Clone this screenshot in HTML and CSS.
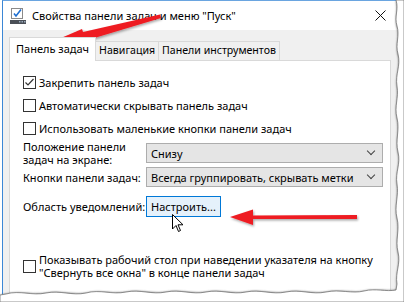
FILE: index.html
```html
<!DOCTYPE html>
<html lang="ru">
<head>
    <meta charset="UTF-8">
    <title>Свойства панели задач и меню "Пуск"</title>
    <link rel="stylesheet" href="styles.css">
</head>
<body>

<div class="window">
    <div class="titlebar">
        <svg class="app-icon" width="16" height="16" viewBox="0 0 16 16">
            <rect x="1.5" y="0.5" width="11" height="10" fill="#fff" stroke="#8a8a8a"/>
            <path d="M4 5.5 L6 8 L11 1.5" fill="none" stroke="#1f6fd1" stroke-width="1.6"/>
            <rect x="0" y="12" width="16" height="4" fill="#4a4f57"/>
            <rect x="9" y="13" width="1.5" height="1.5" fill="#9ab"/>
            <rect x="11.5" y="13" width="1.5" height="1.5" fill="#9ab"/>
            <rect x="14" y="13" width="1.5" height="1.5" fill="#9ab"/>
        </svg>
        <span class="title">Свойства панели задач и меню "Пуск"</span>
        <svg class="close" width="11" height="11" viewBox="0 0 11 11">
            <path d="M0.5 0.5 L10.5 10.5 M10.5 0.5 L0.5 10.5" stroke="#111" stroke-width="1"/>
        </svg>
    </div>

    <div class="client">
        <div class="tabs">
            <div class="tab active">Панель задач</div>
            <div class="tab">Навигация</div>
            <div class="tab">Панели инструментов</div>
        </div>

        <div class="panel">
            <label class="check-row">
                <span class="checkbox checked">
                    <svg width="11" height="11" viewBox="0 0 11 11"><path d="M1.5 5.5 L4 8 L9.5 2" fill="none" stroke="#333" stroke-width="1.2"/></svg>
                </span>
                Закрепить панель задач
            </label>
            <label class="check-row">
                <span class="checkbox"></span>
                Автоматически скрывать панель задач
            </label>
            <label class="check-row">
                <span class="checkbox"></span>
                Использовать маленькие кнопки панели задач
            </label>

            <div class="fields">
                <span class="field-label">Положение панели<br>задач на экране:</span>
                <div class="select"><span>Снизу</span><i class="chevron"></i></div>

                <span class="field-label">Кнопки панели задач:</span>
                <div class="select"><span>Всегда группировать, скрывать метки</span><i class="chevron"></i></div>

                <span class="field-label notify-label">Область уведомлений:</span>
                <div class="notify-cell"><button class="btn">Настроить...</button></div>
            </div>

            <label class="check-row bottom-row">
                <span class="checkbox"></span>
                <span class="two-line">Показывать рабочий стол при наведении указателя на кнопку<br>"Свернуть все окна" в конце панели задач</span>
            </label>
        </div>
    </div>
</div>

<!-- pointer over the button -->
<svg class="cursor" width="12" height="19" viewBox="0 0 12 19">
    <path d="M0.5 0.5 L0.5 15 L4 11.5 L6.5 17.5 L8.5 16.5 L6 10.8 L11 10.8 Z" fill="#fff" stroke="#000" stroke-width="1"/>
</svg>

<!-- red callout arrows -->
<svg class="arrows" width="404" height="302" viewBox="0 0 404 302">
    <defs>
        <filter id="sh" x="-20%" y="-20%" width="140%" height="140%">
            <feDropShadow dx="1" dy="1.5" stdDeviation="1" flood-color="#000" flood-opacity="0.35"/>
        </filter>
    </defs>
    <g fill="#ee1c24" filter="url(#sh)">
        <path d="M160 14.5 L83 32 L82 29 L54 41 L87 44 L86 40.5 L161 18 Z"/>
        <path d="M357 215 L253 215.5 L253 209.5 L230 217 L253 225 L253 219 L357 219 Z"/>
    </g>
</svg>

<!-- torn paper edges -->
<svg class="torn" width="404" height="302" viewBox="0 0 404 302">
    <defs>
        <filter id="tsh" x="-10%" y="-10%" width="120%" height="120%">
            <feGaussianBlur stdDeviation="1"/>
        </filter>
    </defs>
    <path d="M396 0 C399 10 394 16 397 26 C400 36 395 44 398 54 C401 66 395 74 397 86 C399 98 394 106 397 118 C400 130 395 140 398 152 C401 164 395 172 397 184 C399 196 394 206 397 218 C400 230 395 240 398 252 C401 264 395 272 397 284 L396 290 C386 292 376 288 364 291 C352 294 340 289 326 292 C312 295 300 289 286 292 C272 295 260 289 246 292 C232 295 220 289 206 292 C192 295 180 289 166 292 C152 295 140 289 126 292 C112 295 100 289 86 293 C72 296 60 290 46 293 C32 296 20 290 6 294 L0 295"
          fill="none" stroke="#555" stroke-width="2" filter="url(#tsh)" transform="translate(1,1)"/>
    <path d="M396 0 C399 10 394 16 397 26 C400 36 395 44 398 54 C401 66 395 74 397 86 C399 98 394 106 397 118 C400 130 395 140 398 152 C401 164 395 172 397 184 C399 196 394 206 397 218 C400 230 395 240 398 252 C401 264 395 272 397 284 L396 290 C386 292 376 288 364 291 C352 294 340 289 326 292 C312 295 300 289 286 292 C272 295 260 289 246 292 C232 295 220 289 206 292 C192 295 180 289 166 292 C152 295 140 289 126 292 C112 295 100 289 86 293 C72 296 60 290 46 293 C32 296 20 290 6 294 L0 295 L0 302 L404 302 L404 0 Z"
          fill="#fff" stroke="#777" stroke-width="0.8"/>
</svg>

</body>
</html>
```

FILE: styles.css
```css
body {
    margin: 0;
    width: 404px;
    height: 302px;
    overflow: hidden;
    background: #fff;
    font-family: "Noto Sans", "Open Sans", sans-serif;
    font-size: 11px;
    color: #000;
    position: relative;
}

.window {
    margin-left: 2px;
    width: 402px;
    height: 302px;
    border-left: 1px solid #3b87d6;
    border-top: 1px solid #6aa5e0;
    background: #f0f0f0;
    box-sizing: border-box;
}

.titlebar {
    height: 29px;
    background: #fff;
    display: flex;
    align-items: center;
    padding-left: 7px;
}

.app-icon {
    margin-right: 6px;
}

.title {
    flex: 1;
    font-size: 11px;
    white-space: nowrap;
}

.close {
    margin-right: 18px;
}

.client {
    padding: 7px 0 0 6px;
}

.tabs {
    display: flex;
    align-items: flex-end;
    height: 23px;
}

.tab {
    height: 18px;
    line-height: 17px;
    padding: 0 3px;
    border: 1px solid #d9d9d9;
    border-bottom: none;
    background: #f0f0f0;
    margin-left: -1px;
    font-size: 10.6px;
    white-space: nowrap;
}

.tab.active {
    height: 23px;
    line-height: 22px;
    background: #fff;
    margin-left: 0;
    padding: 0 6px;
    font-size: 11px;
    position: relative;
    z-index: 1;
    margin-bottom: -1px;
}

.panel {
    width: 382px;
    height: 240px;
    background: #fff;
    border: 1px solid #d9d9d9;
    padding: 13px 8px 0 13px;
    box-sizing: border-box;
}

.check-row {
    display: flex;
    align-items: center;
    height: 16px;
    margin-bottom: 7px;
    white-space: nowrap;
}

.checkbox {
    width: 11px;
    height: 11px;
    border: 1px solid #333;
    margin-right: 3px;
    display: flex;
    align-items: center;
    justify-content: center;
    background: #fff;
    flex-shrink: 0;
}

.fields {
    display: grid;
    grid-template-columns: 123px 237px;
    grid-template-rows: 22px 20px 22px;
    row-gap: 3px;
    align-items: center;
    margin-top: -1px;
}

.field-label {
    line-height: 13px;
    white-space: nowrap;
}

.notify-label {
    margin-top: 11px;
}

.select {
    height: 20px;
    box-sizing: border-box;
    border: 1px solid #adadad;
    background: #e5e5e5;
    display: flex;
    align-items: center;
    justify-content: space-between;
    padding: 0 8px 0 4px;
    white-space: nowrap;
}

.chevron {
    width: 5px;
    height: 5px;
    border-right: 1px solid #444;
    border-bottom: 1px solid #444;
    transform: rotate(45deg);
    margin-top: -4px;
}

.notify-cell {
    margin-top: 11px;
}

.btn {
    font: inherit;
    height: 21px;
    padding: 0 4px;
    background: #e5f1fb;
    border: 1px solid #0078d7;
    color: #000;
    white-space: nowrap;
}

.bottom-row {
    margin-top: 40px;
    height: 28px;
}

.two-line {
    line-height: 13px;
    margin-top: -1px;
}

.cursor {
    position: absolute;
    left: 172px;
    top: 214px;
}

.arrows, .torn {
    position: absolute;
    left: 0;
    top: 0;
}
```
